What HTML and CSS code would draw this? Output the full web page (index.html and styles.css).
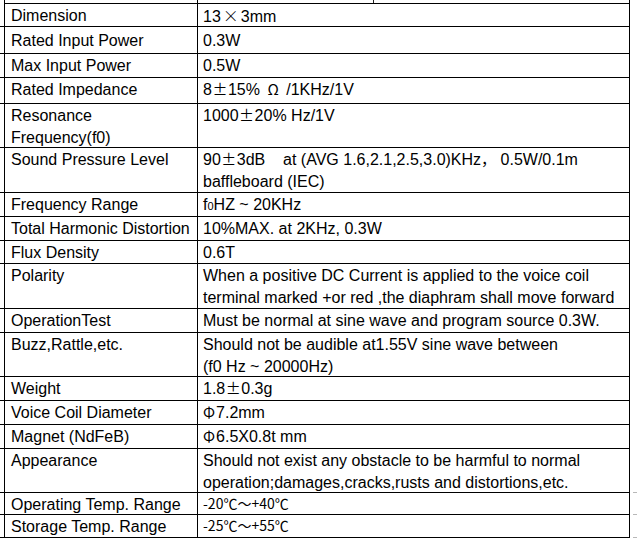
FILE: index.html
```html
<!DOCTYPE html>
<html>
<head>
<meta charset="utf-8">
<link rel="stylesheet" href="styles.css">
</head>
<body>
<div class="spec">
  <div class="gap top"></div><div class="name top"></div><div class="val top"><span class="tick"></span></div><div class="edge"></div>

  <div class="gap"></div><div class="name">Dimension</div><div class="val">13<span class="times">×</span>3mm</div><div class="edge"></div>
  <div class="gap"></div><div class="name low">Rated Input Power</div><div class="val low">0.3W</div><div class="edge"></div>
  <div class="gap"></div><div class="name">Max Input Power</div><div class="val">0.5W</div><div class="edge"></div>
  <div class="gap"></div><div class="name">Rated Impedance</div><div class="val">8<span class="fw">±</span>15% <span class="ohm">Ω</span> /1KHz/1V</div><div class="edge"></div>
  <div class="gap"></div><div class="name">Resonance<br>Frequency(f0)</div><div class="val">1000<span class="fw">±</span>20% Hz/1V</div><div class="edge"></div>
  <div class="gap"></div><div class="name">Sound Pressure Level</div><div class="val">90<span class="fw">±</span>3dB &nbsp;&nbsp;&nbsp;at (AVG 1.6,2.1,2.5,3.0)KHz<span class="comma">，</span> 0.5W/0.1m<br>baffleboard (IEC)</div><div class="edge"></div>
  <div class="gap"></div><div class="name">Frequency Range</div><div class="val">f<span class="sub">0</span>HZ ~ 20KHz</div><div class="edge"></div>
  <div class="gap"></div><div class="name">Total Harmonic Distortion</div><div class="val">10%MAX. at 2KHz, 0.3W</div><div class="edge"></div>
  <div class="gap"></div><div class="name">Flux Density</div><div class="val">0.6T</div><div class="edge"></div>
  <div class="gap"></div><div class="name">Polarity</div><div class="val">When a positive DC Current is applied to the voice coil<br>terminal marked +or red ,the diaphram shall move forward</div><div class="edge"></div>
  <div class="gap"></div><div class="name">OperationTest</div><div class="val">Must be normal at sine wave and program source 0.3W.</div><div class="edge"></div>
  <div class="gap"></div><div class="name">Buzz,Rattle,etc.</div><div class="val">Should not be audible at1.55V sine wave between<br>(f0 Hz ~ 20000Hz)</div><div class="edge"></div>
  <div class="gap"></div><div class="name">Weight</div><div class="val">1.8<span class="fw">±</span>0.3g</div><div class="edge"></div>
  <div class="gap"></div><div class="name">Voice Coil Diameter</div><div class="val"><span class="phi">Φ</span>7.2mm</div><div class="edge"></div>
  <div class="gap"></div><div class="name">Magnet (NdFeB)</div><div class="val"><span class="phi">Φ</span>6.5X0.8t mm</div><div class="edge"></div>
  <div class="gap"></div><div class="name">Appearance</div><div class="val">Should not exist any obstacle to be harmful to normal<br>operation;damages,cracks,rusts and distortions,etc.</div><div class="edge dash"></div>
  <div class="gap"></div><div class="name">Operating Temp. Range</div><div class="val temp">-20℃～+40℃</div><div class="edge dash"></div>
  <div class="gap"></div><div class="name">Storage Temp. Range</div><div class="val temp">-25℃～+55℃</div><div class="edge dash"></div>
</div>
</body>
</html>
```
FILE: styles.css
```css
html, body {
  margin: 0;
  padding: 0;
  background: #ffffff;
}

.spec {
  display: grid;
  grid-template-columns: 4px 194px 432px 7px;
  grid-template-rows: 4px 23px 27px 24px 26px 44px 45px 24px 24px 23px 45px 24px 44px 24px 24px 24px 44px 22px 23px;
  width: 637px;
  font-family: "Liberation Sans", Arial, "Noto Sans CJK SC", sans-serif;
  font-size: 16px;
  line-height: 22px;
  color: #000;
}

.spec > div {
  box-sizing: border-box;
  overflow: hidden;
  white-space: nowrap;
}

.gap {
  border-bottom: 1px solid #000;
}

.gap.top {
  border-bottom: none;
}

.name {
  border-left: 1px solid #000;
  border-right: 1px solid #000;
  border-bottom: 1px solid #000;
  padding: 1px 0 0 6px;
}

.val {
  border-right: 1px solid #000;
  border-bottom: 1px solid #000;
  padding: 1px 0 0 5px;
}

.name.low,
.val.low {
  padding-top: 3px;
}

.name.top,
.val.top {
  padding: 0;
}

.edge.dash {
  margin-left: 3px;
  border-bottom: 1px dashed #b8b8b8;
}

.tick {
  display: block;
  width: 1px;
  height: 3px;
  margin-left: 175px;
  background: #222;
}

.fw,
.ohm,
.times,
.phi,
.comma {
  font-family: "Noto Sans CJK SC", sans-serif;
  font-size: 15px;
  line-height: 20px;
}

.fw {
  margin: 0 0.5px;
}

.ohm {
  margin: 0 3px;
}

.times {
  font-size: 16px;
  font-weight: 300;
  margin: 0 2px;
}

.phi {
  margin-right: 1px;
}

.sub {
  font-size: 11px;
  line-height: 10px;
}

.val.temp {
  font-family: "Noto Sans CJK SC", sans-serif;
  font-size: 14px;
  line-height: 20px;
  padding-top: 0;
}
```
